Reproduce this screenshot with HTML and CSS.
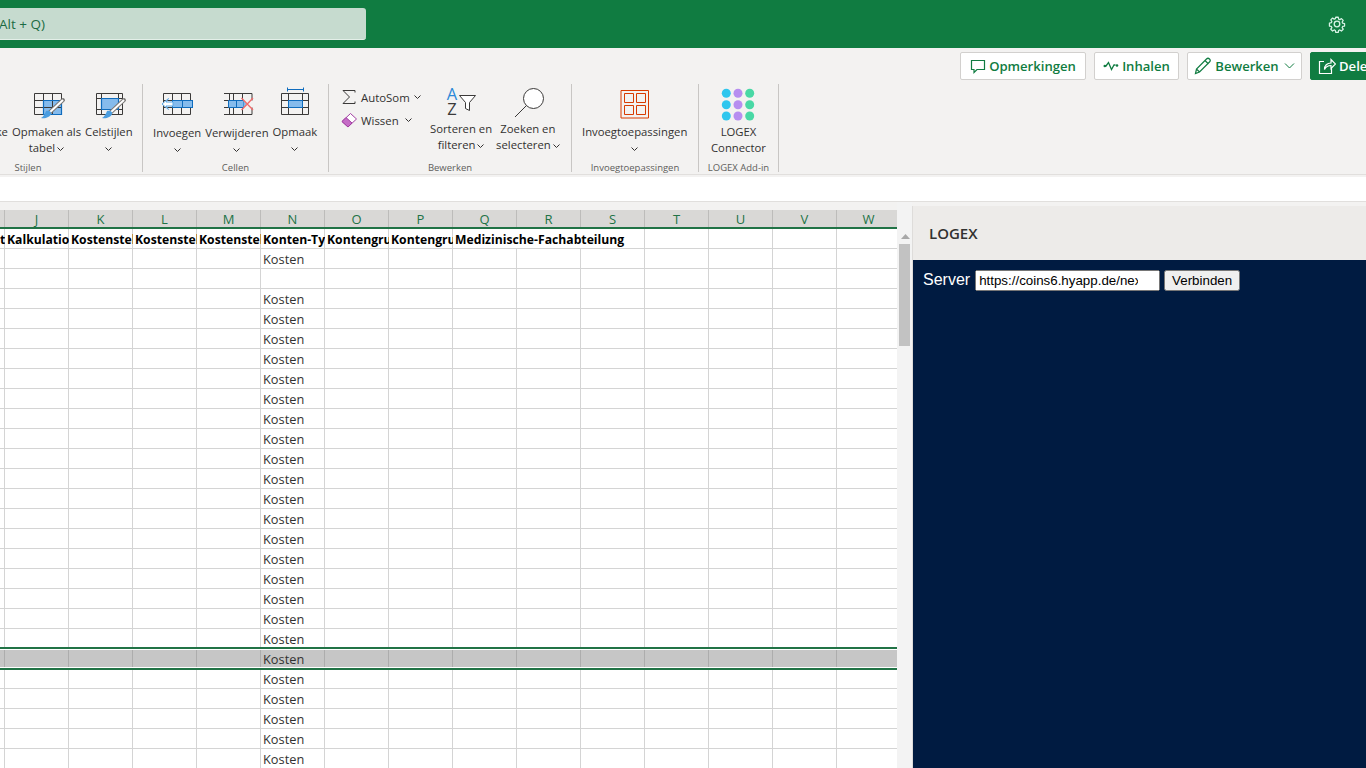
FILE: index.html
```html
<!DOCTYPE html>
<html lang="nl">
<head>
<meta charset="utf-8">
<title>Excel</title>
<link rel="stylesheet" href="styles.css">
</head>
<body>
<div class="app">
  <header class="topbar">
    <div class="search"><span class="search-text">Alt + Q)</span></div>
    <svg class="gear" width="18" height="18" viewBox="0 0 18 18"><path d="M7.600 1.500h2.800l.4 2.100 1.300.6 1.800-1.200 2 2-1.200 1.800.6 1.300 2.100.4v2.800l-2.100.4-.6 1.300 1.200 1.800-2 2-1.800-1.200-1.300.6-.4 2.100H7.600l-.4-2.100-1.300-.6-1.800 1.200-2-2 1.200-1.800-.6-1.300-2.100-.4V7.900l2.100-.4.6-1.300-1.200-1.800 2-2 1.800 1.200 1.300-.6z" transform="translate(.9 .9) scale(.9)" fill="none" stroke="#d8f3e6" stroke-width="1.400" stroke-linejoin="round"/><circle cx="9" cy="9" r="2.800" fill="none" stroke="#d8f3e6" stroke-width="1.300"/></svg>
  </header>

  <div class="commands">
    <button class="cmd cmd-comment"><svg width="16" height="16" viewBox="0 0 16 16"><path d="M1.500 2.500h13v9H7l-3 3v-3H1.500z" fill="none" stroke="#107c41" stroke-width="1.200"/></svg>Opmerkingen</button>
    <button class="cmd cmd-catch"><svg width="16" height="16" viewBox="0 0 16 16"><path d="M1 8h2l2.500-3.500 3 7 2.500-4.500h1.500" fill="none" stroke="#107c41" stroke-width="1.300"/><circle cx="1.800" cy="8" r="1.300" fill="#107c41"/><circle cx="14" cy="7.500" r="1.300" fill="#107c41"/></svg>Inhalen</button>
    <button class="cmd cmd-edit"><svg width="18" height="18" viewBox="0 0 18 18"><path d="M1.500 16.500l1-4.500L12.500 2c1-1 2-1 3 0s1 2 0 3L5.500 15z M11 3.500l3.500 3.500 M2.500 12l3 3" fill="none" stroke="#107c41" stroke-width="1.200"/></svg>Bewerken<svg class="cmd-chev" width="11" height="6" viewBox="0 0 11 6"><path d="M1 .5l4.500 4.500L10 .5" fill="none" stroke="#107c41"/></svg></button>
    <button class="cmd cmd-share"><svg width="18" height="18" viewBox="0 0 18 18"><path d="M6 4.500H1.500v12h12V11 M6.500 12.500c0-4 2.500-6.500 6.500-6.500V2.500l4.500 4.500-4.500 4.500V8.500c-3 0-5 1-6.500 4z" fill="none" stroke="#fff" stroke-width="1.200"/></svg>Delen</button>
  </div>

  <div class="ribbon">
    <section class="group group-styles">
      <div class="items">
        <div class="big"><div class="ico"></div><span>Voorwaardelijke</span><span>opmaak</span></div>
        <div class="big">
          <div class="ico"><svg width="40" height="40" viewBox="0 0 40 40"><rect x="16.500" y="16.500" width="18" height="14" fill="#85bbec"/><path d="M7.500 9.500h27v21h-27zM7.500 16.500h27M7.500 23.500h27M16.500 9.500v21M25.500 9.500v21" fill="none" stroke="#3b3a39"/><path d="M16.500 16.500h18v14h-18z" fill="none" stroke="#0f6cbd" stroke-width="1.200"/><path d="M36 16L22 29" stroke="#797775" stroke-width="4" stroke-linecap="round"/><path d="M36 16L22 29" stroke="#fff" stroke-width="2"/><path d="M19 27c3-1 6 1 5 3-1 3-6 5-10 4 2-1 4-4 5-7z" fill="#4a9de0"/></svg></div>
          <span>Opmaken als</span><span>tabel<svg class="chev" width="7" height="4" viewBox="0 0 7 4"><path d="M.5.500l3 3 3-3" fill="none" stroke="#323130"/></svg></span>
        </div>
        <div class="big">
          <div class="ico"><svg width="40" height="40" viewBox="0 0 40 40"><rect x="12.500" y="14.500" width="17" height="11" fill="#85bbec"/><path d="M7.500 9.500h26v21h-26zM7.500 14.500h26M7.500 25.500h26M12.500 9.500v21M29.500 9.500v21" fill="none" stroke="#3b3a39"/><path d="M12.500 14.500h17v11h-17z" fill="none" stroke="#0f6cbd" stroke-width="1.200"/><path d="M35 16L21 29" stroke="#797775" stroke-width="4" stroke-linecap="round"/><path d="M35 16L21 29" stroke="#fff" stroke-width="2"/><path d="M18 27c3-1 6 1 5 3-1 3-6 5-10 4 2-1 4-4 5-7z" fill="#4a9de0"/></svg></div>
          <span>Celstijlen</span><span><svg class="chev solo" width="7" height="4" viewBox="0 0 7 4"><path d="M.5.500l3 3 3-3" fill="none" stroke="#323130"/></svg></span>
        </div>
      </div>
      <div class="glabel">Stijlen</div>
    </section>

    <section class="group group-cells">
      <div class="items">
        <div class="big">
          <div class="ico ico-41"><svg width="40" height="41" viewBox="0 0 40 41"><path d="M6.500 9.500h27v21h-27zM6.500 16.500h27M6.500 23.500h27M15.500 9.500v21M24.500 9.500v21" fill="none" stroke="#3b3a39"/><rect x="15.500" y="16.500" width="20" height="7" fill="#85bbec" stroke="#0f6cbd"/><path d="M25.500 16.500v7" stroke="#0f6cbd"/><path d="M16 18h-7l2.500-3.500L5 20l6.500 5.500L9 22h7z" fill="#fff" stroke="#5ba7e6"/></svg></div>
          <span>Invoegen</span><span><svg class="chev solo" width="7" height="4" viewBox="0 0 7 4"><path d="M.5.500l3 3 3-3" fill="none" stroke="#323130"/></svg></span>
        </div>
        <div class="big">
          <div class="ico ico-41"><svg width="40" height="41" viewBox="0 0 40 41"><path d="M7 9.500h28M7 30.500h28M7 16.500h5M7 23.500h5M12.500 9.500v7M12.500 23.500v7M16.500 9.500v7M16.500 23.500v7M25.500 9.500v7M25.500 23.500v7M35 9.500v7M35 23.500v7" fill="none" stroke="#3b3a39"/><path d="M11.500 16.500h15v7h-15z" fill="#85bbec" stroke="#0f6cbd"/><path d="M19.500 16.500v7" stroke="#0f6cbd"/><path d="M26.500 16.500l3 3.500-3 3.500z" fill="#85bbec"/><path d="M24.500 14l11.500 12M36 14L24.500 26" stroke="#f26a6a" stroke-width="1.300"/></svg></div>
          <span>Verwijderen</span><span><svg class="chev solo" width="7" height="4" viewBox="0 0 7 4"><path d="M.5.500l3 3 3-3" fill="none" stroke="#323130"/></svg></span>
        </div>
        <div class="big">
          <div class="ico"><svg width="40" height="40" viewBox="0 0 40 40"><path d="M12.500 5.500h16M12.500 3.500v4M28.500 3.500v4" fill="none" stroke="#0f6cbd"/><path d="M6.500 9.500h27v21h-27zM6.500 16.500h27M6.500 23.500h27M13.500 9.500v21M27.500 9.500v21" fill="none" stroke="#3b3a39"/><rect x="13.500" y="16.500" width="14" height="7" fill="#85bbec" stroke="#0f6cbd"/></svg></div>
          <span>Opmaak</span><span><svg class="chev solo" width="7" height="4" viewBox="0 0 7 4"><path d="M.5.500l3 3 3-3" fill="none" stroke="#323130"/></svg></span>
        </div>
      </div>
      <div class="glabel">Cellen</div>
    </section>

    <section class="group group-edit">
      <div class="items">
        <div class="smalls">
          <div class="small"><svg width="16" height="16" viewBox="0 0 16 16"><path d="M14 3.500V1.500H2l6.500 6.500L2 14.500h12v-2" fill="none" stroke="#3b3a39"/></svg><span>AutoSom</span><svg class="chev" width="7" height="4" viewBox="0 0 7 4"><path d="M.5.500l3 3 3-3" fill="none" stroke="#323130"/></svg></div>
          <div class="small"><svg width="16" height="16" viewBox="0 0 16 16"><path d="M1 9.500L9.500 1.500l6 5.500L7 15z" fill="#fff" stroke="#a23fa3"/><path d="M1 9.500L5 5.500l6 5.500-4 4z" fill="#c56cc6" stroke="#a23fa3"/></svg><span>Wissen</span><svg class="chev chev-wide" width="7" height="4" viewBox="0 0 7 4"><path d="M.5.500l3 3 3-3" fill="none" stroke="#323130"/></svg></div>
        </div>
        <div class="big">
          <div class="ico ico-37"><svg width="40" height="37" viewBox="0 0 40 37"><text x="11" y="16" class="az az-a">A</text><text x="11" y="31" class="az">Z</text><path d="M18.500 11.500h16l-6 7v8l-4-2v-6z" fill="#fff" stroke="#3b3a39"/></svg></div>
          <span>Sorteren en</span><span>filteren<svg class="chev" width="7" height="4" viewBox="0 0 7 4"><path d="M.5.500l3 3 3-3" fill="none" stroke="#323130"/></svg></span>
        </div>
        <div class="big">
          <div class="ico ico-37"><svg width="40" height="37" viewBox="0 0 40 37"><circle cx="25.500" cy="14.500" r="10" fill="#fff" stroke="#3b3a39"/><path d="M18.500 21.500L7 33" stroke="#3b3a39"/></svg></div>
          <span>Zoeken en</span><span>selecteren<svg class="chev" width="7" height="4" viewBox="0 0 7 4"><path d="M.5.500l3 3 3-3" fill="none" stroke="#323130"/></svg></span>
        </div>
      </div>
      <div class="glabel">Bewerken</div>
    </section>

    <section class="group group-addins">
      <div class="items">
        <div class="big">
          <div class="ico"><svg width="40" height="40" viewBox="0 0 40 40"><path d="M6 6.500h27.500V34H6zM9.500 9.500h9v9h-9zM21.500 9.500h9v9h-9zM9.500 21.500h9v9h-9zM21.500 21.500h9v9h-9z" fill="none" stroke="#d83b01"/></svg></div>
          <span>Invoegtoepassingen</span><span><svg class="chev solo" width="7" height="4" viewBox="0 0 7 4"><path d="M.5.500l3 3 3-3" fill="none" stroke="#323130"/></svg></span>
        </div>
      </div>
      <div class="glabel">Invoegtoepassingen</div>
    </section>

    <section class="group group-logex">
      <div class="items">
        <div class="big">
          <div class="ico"><svg width="40" height="40" viewBox="0 0 40 40"><g fill="#2fc6ee"><circle cx="8.300" cy="9.300" r="4.500"/><circle cx="8.300" cy="20.700" r="4.500"/><circle cx="8.300" cy="32" r="4.500"/></g><g fill="#b78ef0"><circle cx="20" cy="9.300" r="4.500"/><circle cx="20" cy="20.700" r="4.500"/><circle cx="20" cy="32" r="4.500"/></g><g fill="#49d8a5"><circle cx="31.700" cy="9.300" r="4.500"/><circle cx="31.700" cy="20.700" r="4.500"/><circle cx="31.700" cy="32" r="4.500"/></g></svg></div>
          <span>LOGEX</span><span>Connector</span>
        </div>
      </div>
      <div class="glabel">LOGEX Add-in</div>
    </section>
  </div>

  <div class="formula"></div>

  <main class="main">
    <div class="sheet">
      <div class="colhead">
        <span></span><span>J</span><span>K</span><span>L</span><span>M</span><span>N</span><span>O</span><span>P</span><span>Q</span><span>R</span><span>S</span><span>T</span><span>U</span><span>V</span><span>W</span>
      </div>
      <div class="grid">
        <div class="row row-head">
          <span class="cell">t</span><span class="cell">Kalkulationsart</span><span class="cell">Kostenstelle</span><span class="cell">Kostenstelle</span><span class="cell">Kostenstelle</span><span class="cell">Konten-Typ</span><span class="cell">Kontengruppe</span><span class="cell">Kontengruppe</span><span class="cell cell-wide">Medizinische-Fachabteilung</span>
        </div>
        <div class="row"><span class="cell n">Kosten</span></div>
        <div class="row"></div>
        <div class="row"><span class="cell n">Kosten</span></div>
        <div class="row"><span class="cell n">Kosten</span></div>
        <div class="row"><span class="cell n">Kosten</span></div>
        <div class="row"><span class="cell n">Kosten</span></div>
        <div class="row"><span class="cell n">Kosten</span></div>
        <div class="row"><span class="cell n">Kosten</span></div>
        <div class="row"><span class="cell n">Kosten</span></div>
        <div class="row"><span class="cell n">Kosten</span></div>
        <div class="row"><span class="cell n">Kosten</span></div>
        <div class="row"><span class="cell n">Kosten</span></div>
        <div class="row"><span class="cell n">Kosten</span></div>
        <div class="row"><span class="cell n">Kosten</span></div>
        <div class="row"><span class="cell n">Kosten</span></div>
        <div class="row"><span class="cell n">Kosten</span></div>
        <div class="row"><span class="cell n">Kosten</span></div>
        <div class="row"><span class="cell n">Kosten</span></div>
        <div class="row"><span class="cell n">Kosten</span></div>
        <div class="row"><span class="cell n">Kosten</span></div>
        <div class="row row-sel"><span class="cell n">Kosten</span></div>
        <div class="row"><span class="cell n">Kosten</span></div>
        <div class="row"><span class="cell n">Kosten</span></div>
        <div class="row"><span class="cell n">Kosten</span></div>
        <div class="row"><span class="cell n">Kosten</span></div>
        <div class="row"><span class="cell n">Kosten</span></div>
      </div>
    </div>
    <div class="scroll">
      <svg class="scroll-up" width="9" height="5" viewBox="0 0 9 5"><path d="M0 5L4.500 0 9 5z" fill="#a8a8a8"/></svg>
      <div class="thumb"></div>
    </div>
    <aside class="pane">
      <div class="pane-head">LOGEX</div>
      <div class="pane-body">
        <label class="server-label" for="server">Server</label>
        <input class="server-input" id="server" type="text" value="https://coins6.hyapp.de/nexus">
        <button class="connect">Verbinden</button>
      </div>
    </aside>
  </main>
</div>
</body>
</html>
```

FILE: styles.css
```css
* { box-sizing: border-box; }
html, body { margin: 0; height: 100%; overflow: hidden; }
body { font-family: "Open Sans", sans-serif; color: #323130; background: #f3f2f1; }
.app { width: 1366px; height: 768px; display: flex; flex-direction: column; overflow: hidden; }

.topbar { height: 48px; flex: none; background: #107c41; display: flex; align-items: center; justify-content: space-between; padding: 0 20px 0 0; }
.search { width: 366px; height: 32px; background: #c6dbcf; border-radius: 0 3px 3px 0; border-bottom: 1px solid #e3efe8; display: flex; align-items: center; }
.search-text { margin-left: -1px; font-size: 13.500px; color: #1b6b43; }
.gear { display: block; }

.commands { height: 36px; flex: none; display: flex; gap: 8px; padding: 4px 0 4px 960px; overflow: hidden; }
.cmd { flex: none; height: 28px; display: flex; align-items: center; gap: 3px; padding: 0; background: #fff; border: 1px solid #d2d0ce; border-radius: 2px; font: 600 13.100px "Open Sans", sans-serif; color: #107c41; justify-content: center; }
.cmd-comment { width: 126px; }
.cmd-catch { width: 85px; }
.cmd-edit { width: 115px; }
.cmd-chev { margin-left: 2px; }
.cmd-share { width: 100px; background: #107c41; border-color: #107c41; color: #fff; justify-content: flex-start; padding-left: 7px; }

.ribbon { height: 91px; flex: none; display: flex; margin-left: -86px; border-bottom: 1px solid #e1dfdd; align-items: flex-start; }
.group { height: 88px; flex: none; display: flex; flex-direction: column; border-right: 1px solid #c8c6c4; }
.items { height: 79px; flex: none; display: flex; gap: 4px; }
.glabel { height: 9px; line-height: 9px; font-size: 9.500px; text-align: center; color: #605e5c; white-space: nowrap; }
.group-styles { width: 229px; }
.group-styles .items { padding-left: 9px; }
.group-cells { width: 186px; }
.group-cells .items { padding-left: 10px; }
.group-edit { width: 243px; }
.group-edit .items { padding-left: 12px; }
.group-addins { width: 127px; }
.group-addins .items { padding-left: 10px; }
.group-logex { width: 80px; }
.group-logex .items { padding-left: 12px; }

.big { display: flex; flex-direction: column; align-items: center; font-size: 11.300px; line-height: 16px; white-space: nowrap; }
.big span { height: 16px; display: block; }
.ico { height: 40px; width: 40px; flex: none; }
.ico-41 { height: 41px; }
.ico-37 { height: 37px; }
.ico svg { display: block; }
.chev { margin-left: 2px; vertical-align: 1px; }
.chev.solo { margin-left: 0; }

.smalls { width: 85px; flex: none; display: flex; flex-direction: column; gap: 7px; padding-top: 5px; }
.small { height: 16px; display: flex; align-items: center; gap: 4px; font-size: 11.400px; white-space: nowrap; }
.small .chev { margin-left: 0; }
.small .chev-wide { margin-left: 2px; }
.az { font: 16.500px "Open Sans", sans-serif; fill: #3b3a39; text-anchor: middle; }
.az-a { fill: #2b88d8; }

.formula { height: 25px; flex: none; margin-top: 2px; background: #fff; border-bottom: 1px solid #e1dfdd; }

.main { flex: 1; min-height: 0; display: flex; align-items: stretch; }
.sheet { width: 897px; flex: none; padding-top: 8px; background: #f3f2f1; overflow: hidden; }
.colhead { display: grid; grid-template-columns: 5px repeat(14, 64px); height: 19px; background: #d9d8d6; border-bottom: 2px solid #217346; overflow: hidden; }
.colhead span { text-align: center; font-size: 13px; line-height: 18px; color: #217346; border-right: 1px solid #bdbcba; height: 17px; }
.grid { background: #fff; }
.row { height: 20px; display: grid; grid-template-columns: 5px repeat(13, 64px) 60px; background-color: #fff; background-image: repeating-linear-gradient(to right, #d4d4d4 0, #d4d4d4 1px, transparent 1px, transparent 64px), linear-gradient(to top, #d4d4d4 1px, transparent 1px); background-position: 4px 0, 0 0; background-repeat: no-repeat; background-size: 100% 100%; font-size: 12.800px; line-height: 20px; color: #323130; }
.cell { display: block; overflow: hidden; white-space: nowrap; padding-left: 2px; }
.row-head { font-size: 12.200px; line-height: 22px; }
.row-head .cell { font-weight: 700; color: #000; }
.row-head .cell:first-child { padding-left: 0; }
.cell-wide { grid-column: span 3; height: 19px; margin-right: 1px; background: #fff; }
.n { grid-column: 6; }
.row-sel { position: relative; background-color: #c6c6c6; background-image: repeating-linear-gradient(to right, #adadad 0, #adadad 1px, transparent 1px, transparent 64px); box-shadow: 0 -2px 0 #217346, 0 1px 0 #217346, inset 0 -1px 0 #217346, inset 0 1px 0 #fff, inset 0 -2px 0 #fff; color: #323130; }

.scroll { width: 15px; flex: none; position: relative; background: #f3f3f3; }
.scroll-up { display: block; position: absolute; left: 4px; top: 32px; }
.thumb { position: absolute; left: 2px; top: 42px; width: 11px; height: 102px; background: #c2c2c2; }

.pane { flex: 1; margin-top: 4px; display: flex; flex-direction: column; border-left: 1px solid #dedcda; }
.pane-head { height: 54px; flex: none; background: #edebe9; padding-left: 16px; font-size: 15px; line-height: 54px; font-weight: 600; color: #323130; }
.pane-body { flex: 1; background: #001b41; padding: 9px 10px; font-family: "Liberation Sans", sans-serif; display: flex; align-items: flex-start; gap: 4px; }
.server-label { font-size: 16px; line-height: 20px; margin-top: 1px; color: #fff; margin-right: 1px; }
.server-input { width: 185px; height: 21px; margin-top: 1px; padding-right: 20px; font: 13.333px "Liberation Sans", sans-serif; }
.connect { height: 21px; width: 76px; margin-top: 1px; padding: 0; font: 13.333px "Liberation Sans", sans-serif; }
```
